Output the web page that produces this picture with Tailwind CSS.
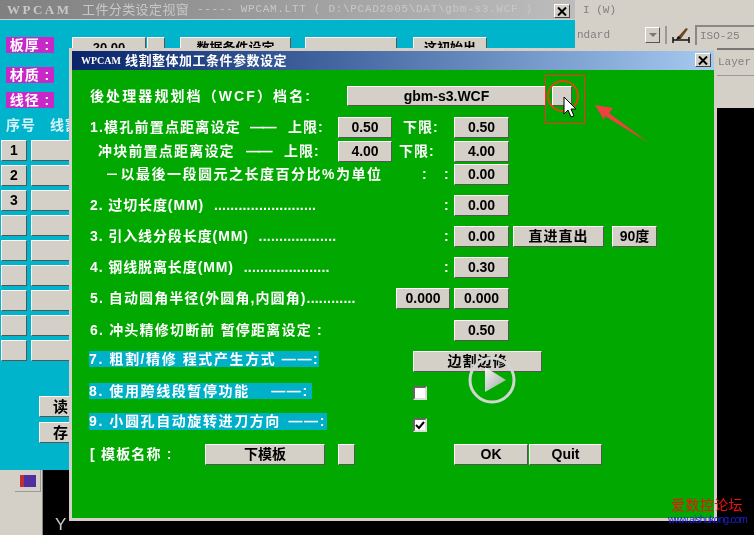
<!DOCTYPE html>
<html lang="en">
<head>
  <meta charset="UTF-8">
  <title>WPCAM</title>
  <script src="https://cdn.jsdelivr.net/npm/@tailwindcss/browser@4"></script>
</head>
<body class="bg-black">
  <div class="relative w-[754px] h-[535px] overflow-hidden bg-black blur-[0.35px] font-['Liberation_Sans','Noto_Sans_CJK_SC',sans-serif]">

    <!-- cad window behind -->
    <div class="absolute left-[575px] top-0 w-[179px] h-[48px] bg-[#d4d0c8] text-[#808080] font-['Liberation_Mono','Noto_Sans_CJK_SC',monospace]">
      <div class="h-[20px] pl-[8px] flex items-center text-[11px]">I (W)</div>
      <div class="flex items-center h-[22px] mt-[4px]">
        <div class="w-[70px] h-[20px] flex items-center bg-[#d4d0c8] text-[11px] pl-[2px]">ndard</div>
        <div class="w-[15px] h-[16px] bg-[#d4d0c8] border border-t-white border-l-white border-r-[#555] border-b-[#555] flex items-center justify-center">
          <div class="w-0 h-0 border-x-[4px] border-x-transparent border-t-[4px] border-t-[#777]"></div>
        </div>
        <div class="ml-[5px] w-[2px] h-[18px] bg-[#999]"></div>
        <svg class="ml-[5px]" width="18" height="18" viewBox="0 0 18 18"><path d="M1 14h16M1 11v6M17 11v6" stroke="#111" stroke-width="1.5" fill="none"/><path d="M5 12 14 2l2 1-8 11z" fill="#6b4a20"/><path d="M4 14l2-4 3 2z" fill="#111"/></svg>
        <div class="ml-[5px] flex-1 h-[20px] flex items-center pl-[3px] border-l-2 border-t-2 border-[#888] text-[11px]">ISO-25</div>
      </div>
    </div>
    <div class="absolute left-[717px] top-[48px] w-[37px] h-[60px] bg-[#d4d0c8] border-t-2 border-[#777]">
      <div class="h-[26px] border-b border-[#999] pl-px flex items-center text-[11px] text-[#808080] font-['Liberation_Mono',monospace] overflow-hidden">Layer</div>
    </div>
    <div class="absolute left-0 top-[470px] w-[43px] h-[65px] bg-[#d4d0c8] border-r border-[#888]">
      <div class="ml-[15px] w-[26px] h-[22px] border-r border-b border-[#999] flex items-center justify-center">
        <div class="w-[16px] h-[12px] bg-[#5030a0] border-l-4 border-[#c03030]"></div>
      </div>
    </div>
    <div class="absolute left-[55px] top-[516px] text-[17px] leading-[18px] text-[#cccccc]">Y</div>

    <!-- parts classification window -->
    <div class="absolute left-0 top-0 w-[577px] h-[470px] bg-[#00b4cc] border-r-2 border-[#d4d0c8] flex flex-col">
      <div class="h-[20px] shrink-0 bg-gradient-to-r from-[#808080] to-[#bdbdbd] flex items-center pl-[7px] text-[#c8c8c8] border-b border-[#d0d0d0]">
        <span class="w-[75px] text-[13px] font-bold tracking-[2.5px] font-['Liberation_Serif',serif]">WPCAM</span>
        <span class="w-[115px] text-[13px] tracking-[0.4px] whitespace-nowrap">工件分类设定视窗</span>
        <span class="text-[11px] whitespace-pre font-['Liberation_Mono','Noto_Sans_CJK_SC',monospace] tracking-[0.7px]">----- WPCAM.LTT ( D:\PCAD2005\DAT\gbm-s3.WCF )</span>
        <div class="absolute left-[554px] top-[4px] w-[16px] h-[14px] bg-[#d4d0c8] border border-t-white border-l-white border-r-[#444] border-b-[#444] flex items-center justify-center">
          <svg width="10" height="9" viewBox="0 0 10 9"><path d="M1 0.5 9 8.5M9 0.5 1 8.5" stroke="#000" stroke-width="2"/></svg>
        </div>
      </div>
      <div class="pl-[6px] pt-[17px]">
        <div class="flex">
          <span class="w-[48px] h-[16px] bg-[#c828c8] text-white text-[14px] leading-[16px] font-bold tracking-[1px] text-center whitespace-nowrap">板厚 :</span>
          <div class="ml-[18px] w-[74px] h-[21px] bg-[#d4d0c8] border border-t-white border-l-white border-r-[#555] border-b-[#555] text-center text-[13px] font-bold">20.00</div>
          <div class="ml-px w-[18px] h-[21px] bg-[#d4d0c8] border border-t-white border-l-white border-r-[#555] border-b-[#555]"></div>
          <div class="ml-[15px] w-[111px] h-[21px] bg-[#d4d0c8] border border-t-white border-l-white border-r-[#555] border-b-[#555] text-center text-[13px] font-bold whitespace-nowrap">数据条件设定</div>
          <div class="ml-[14px] w-[92px] h-[21px] bg-[#d4d0c8] border border-t-white border-l-white border-r-[#555] border-b-[#555]"></div>
          <div class="ml-[16px] w-[74px] h-[21px] bg-[#d4d0c8] border border-t-white border-l-white border-r-[#555] border-b-[#555] text-center text-[13px] font-bold whitespace-nowrap">这初始出</div>
        </div>
        <div class="mt-[9px] w-[48px] h-[16px] bg-[#c828c8] text-white text-[14px] leading-[16px] font-bold tracking-[1px] text-center whitespace-nowrap">材质 :</div>
        <div class="mt-[9px] w-[48px] h-[16px] bg-[#c828c8] text-white text-[14px] leading-[16px] font-bold tracking-[1px] text-center whitespace-nowrap">线径 :</div>
        <div class="mt-[9px] h-[16px] flex text-[14px] leading-[16px] text-[#d8f4f8] font-bold tracking-[1px]">
          <span class="w-[44px]">序号</span><span>线割</span>
        </div>
      </div>
      <div class="mt-[7px] pl-px flex flex-col gap-[4px] text-[14px] font-bold">
        <div class="flex gap-[4px]"><div class="w-[26px] h-[21px] bg-[#d4d0c8] border border-t-white border-l-white border-r-[#555] border-b-[#555] text-center leading-[19px]">1</div><div class="w-[90px] h-[21px] bg-[#d4d0c8] border border-t-white border-l-white border-r-[#555] border-b-[#555] text-center leading-[19px]">新</div></div>
        <div class="flex gap-[4px]"><div class="w-[26px] h-[21px] bg-[#d4d0c8] border border-t-white border-l-white border-r-[#555] border-b-[#555] text-center leading-[19px]">2</div><div class="w-[90px] h-[21px] bg-[#d4d0c8] border border-t-white border-l-white border-r-[#555] border-b-[#555] text-center leading-[19px]">让</div></div>
        <div class="flex gap-[4px]"><div class="w-[26px] h-[21px] bg-[#d4d0c8] border border-t-white border-l-white border-r-[#555] border-b-[#555] text-center leading-[19px]">3</div><div class="w-[90px] h-[21px] bg-[#d4d0c8] border border-t-white border-l-white border-r-[#555] border-b-[#555] text-center leading-[19px]">上</div></div>
        <div class="flex gap-[4px]"><div class="w-[26px] h-[21px] bg-[#d4d0c8] border border-t-white border-l-white border-r-[#555] border-b-[#555]"></div><div class="w-[90px] h-[21px] bg-[#d4d0c8] border border-t-white border-l-white border-r-[#555] border-b-[#555]"></div></div>
        <div class="flex gap-[4px]"><div class="w-[26px] h-[21px] bg-[#d4d0c8] border border-t-white border-l-white border-r-[#555] border-b-[#555]"></div><div class="w-[90px] h-[21px] bg-[#d4d0c8] border border-t-white border-l-white border-r-[#555] border-b-[#555]"></div></div>
        <div class="flex gap-[4px]"><div class="w-[26px] h-[21px] bg-[#d4d0c8] border border-t-white border-l-white border-r-[#555] border-b-[#555]"></div><div class="w-[90px] h-[21px] bg-[#d4d0c8] border border-t-white border-l-white border-r-[#555] border-b-[#555]"></div></div>
        <div class="flex gap-[4px]"><div class="w-[26px] h-[21px] bg-[#d4d0c8] border border-t-white border-l-white border-r-[#555] border-b-[#555]"></div><div class="w-[90px] h-[21px] bg-[#d4d0c8] border border-t-white border-l-white border-r-[#555] border-b-[#555]"></div></div>
        <div class="flex gap-[4px]"><div class="w-[26px] h-[21px] bg-[#d4d0c8] border border-t-white border-l-white border-r-[#555] border-b-[#555]"></div><div class="w-[90px] h-[21px] bg-[#d4d0c8] border border-t-white border-l-white border-r-[#555] border-b-[#555]"></div></div>
        <div class="flex gap-[4px]"><div class="w-[26px] h-[21px] bg-[#d4d0c8] border border-t-white border-l-white border-r-[#555] border-b-[#555]"></div><div class="w-[90px] h-[21px] bg-[#d4d0c8] border border-t-white border-l-white border-r-[#555] border-b-[#555]"></div></div>
      </div>
      <div class="mt-[35px] ml-[39px] flex flex-col gap-[5px] text-[15px] font-bold">
        <div class="w-[60px] h-[21px] bg-[#d4d0c8] border border-t-white border-l-white border-r-[#555] border-b-[#555] pl-[13px] leading-[19px]">读</div>
        <div class="w-[60px] h-[21px] bg-[#d4d0c8] border border-t-white border-l-white border-r-[#555] border-b-[#555] pl-[13px] leading-[19px]">存</div>
      </div>
    </div>

    <!-- wire cutting parameters dialog -->
    <div class="absolute left-[69px] top-[48px] w-[648px] h-[473px] bg-[#d4d0c8] p-[3px] flex flex-col">
      <div class="relative h-[19px] shrink-0 bg-gradient-to-r from-[#0a246a] to-[#a6caf0] flex items-center pl-[9px] text-white">
        <span class="w-[44px] text-[10px] font-bold font-['Liberation_Serif',serif] whitespace-nowrap">WPCAM</span>
        <span class="text-[13px] font-bold tracking-[0.5px] whitespace-nowrap">线割整体加工条件参数设定</span>
        <div class="absolute right-[3px] top-[2px] w-[16px] h-[14px] bg-[#d4d0c8] border border-t-white border-l-white border-r-[#444] border-b-[#444] flex items-center justify-center">
          <svg width="10" height="9" viewBox="0 0 10 9"><path d="M1 0.5 9 8.5M9 0.5 1 8.5" stroke="#000" stroke-width="2"/></svg>
        </div>
      </div>
      <div class="flex-1 bg-[#00a800] pl-[18px] pt-[16px] text-white text-[14px] font-bold">

        <div class="flex items-center h-[20px]">
          <span class="w-[257px] tracking-[2.1px] whitespace-nowrap">後处理器规划档（WCF）档名:</span>
          <div class="w-[199px] h-[20px] bg-[#d4d0c8] border border-t-white border-l-white border-r-[#555] border-b-[#555] flex items-center justify-center text-black text-[14px] font-bold">gbm-s3.WCF</div>
          <div class="ml-[6px] w-[20px] h-[20px] bg-[#d4d0c8] border border-t-white border-l-white border-r-[#555] border-b-[#555]"></div>
        </div>

        <div class="mt-[11px] flex items-center h-[21px]">
          <span class="w-[160px] tracking-[1.2px] whitespace-nowrap">1.模孔前置点距离设定</span>
          <span class="w-[38px] tracking-[-1.5px]">——</span>
          <span class="w-[50px] tracking-[1px] whitespace-nowrap">上限:</span>
          <div class="w-[54px] h-[21px] bg-[#d4d0c8] border border-t-white border-l-white border-r-[#555] border-b-[#555] flex items-center justify-center text-black">0.50</div>
          <span class="w-[62px] pl-[11px] tracking-[1px] whitespace-nowrap">下限:</span>
          <div class="w-[55px] h-[21px] bg-[#d4d0c8] border border-t-white border-l-white border-r-[#555] border-b-[#555] flex items-center justify-center text-black">0.50</div>
        </div>

        <div class="mt-[3px] flex items-center h-[21px] pl-[8px]">
          <span class="w-[148px] tracking-[1.2px] whitespace-nowrap">冲块前置点距离设定</span>
          <span class="w-[38px] tracking-[-1.5px]">——</span>
          <span class="w-[54px] tracking-[1px] whitespace-nowrap">上限:</span>
          <div class="w-[54px] h-[21px] bg-[#d4d0c8] border border-t-white border-l-white border-r-[#555] border-b-[#555] flex items-center justify-center text-black">4.00</div>
          <span class="w-[62px] pl-[7px] tracking-[1px] whitespace-nowrap">下限:</span>
          <div class="w-[55px] h-[21px] bg-[#d4d0c8] border border-t-white border-l-white border-r-[#555] border-b-[#555] flex items-center justify-center text-black">4.00</div>
        </div>

        <div class="mt-[2px] flex items-center h-[21px] pl-[15px]">
          <span class="w-[317px] tracking-[1.5px] whitespace-nowrap">－以最後一段圆元之长度百分比%为单位</span>
          <span class="w-[22px]">:</span>
          <span class="w-[10px]">:</span>
          <div class="w-[55px] h-[21px] bg-[#d4d0c8] border border-t-white border-l-white border-r-[#555] border-b-[#555] flex items-center justify-center text-black">0.00</div>
        </div>

        <div class="mt-[10px] flex items-center h-[21px]">
          <span class="w-[354px] tracking-[0.9px] whitespace-nowrap">2. 过切长度(MM) <span class="ml-[5px] tracking-[0.2px]">.........................</span></span>
          <span class="w-[10px]">:</span>
          <div class="w-[55px] h-[21px] bg-[#d4d0c8] border border-t-white border-l-white border-r-[#555] border-b-[#555] flex items-center justify-center text-black">0.00</div>
        </div>

        <div class="mt-[10px] flex items-center h-[21px]">
          <span class="w-[354px] tracking-[0.9px] whitespace-nowrap">3. 引入线分段长度(MM) <span class="ml-[5px] tracking-[0.2px]">...................</span></span>
          <span class="w-[10px]">:</span>
          <div class="w-[55px] h-[21px] bg-[#d4d0c8] border border-t-white border-l-white border-r-[#555] border-b-[#555] flex items-center justify-center text-black">0.00</div>
          <div class="ml-[4px] w-[91px] h-[21px] bg-[#d4d0c8] border border-t-white border-l-white border-r-[#555] border-b-[#555] flex items-center justify-center text-black tracking-[1px]">直进直出</div>
          <div class="ml-[8px] w-[45px] h-[21px] bg-[#d4d0c8] border border-t-white border-l-white border-r-[#555] border-b-[#555] flex items-center justify-center text-black">90度</div>
        </div>

        <div class="mt-[10px] flex items-center h-[21px]">
          <span class="w-[354px] tracking-[0.9px] whitespace-nowrap">4. 钢线脱离长度(MM) <span class="ml-[5px] tracking-[0.2px]">.....................</span></span>
          <span class="w-[10px]">:</span>
          <div class="w-[55px] h-[21px] bg-[#d4d0c8] border border-t-white border-l-white border-r-[#555] border-b-[#555] flex items-center justify-center text-black">0.30</div>
        </div>

        <div class="mt-[10px] flex items-center h-[21px]">
          <span class="w-[306px] tracking-[1.1px] whitespace-nowrap">5. 自动圆角半径(外圆角,内圆角)<span class="tracking-[0.2px]">............</span></span>
          <div class="w-[54px] h-[21px] bg-[#d4d0c8] border border-t-white border-l-white border-r-[#555] border-b-[#555] flex items-center justify-center text-black">0.000</div>
          <div class="ml-[4px] w-[55px] h-[21px] bg-[#d4d0c8] border border-t-white border-l-white border-r-[#555] border-b-[#555] flex items-center justify-center text-black">0.000</div>
        </div>

        <div class="mt-[11px] flex items-center h-[21px]">
          <span class="w-[364px] tracking-[1.2px] whitespace-nowrap">6. 冲头精修切断前 暂停距离设定 :</span>
          <div class="w-[55px] h-[21px] bg-[#d4d0c8] border border-t-white border-l-white border-r-[#555] border-b-[#555] flex items-center justify-center text-black">0.50</div>
        </div>

        <div class="mt-[10px] flex items-center h-[21px]">
          <span class="-ml-px w-[230px] h-[16px] -mt-[5px] leading-[16px] bg-[#00afc8] tracking-[1.6px] whitespace-nowrap">7. 粗割/精修 程式产生方式 ——:</span>
          <div class="ml-[94px] w-[129px] h-[21px] bg-[#d4d0c8] border border-t-white border-l-white border-r-[#555] border-b-[#555] flex items-center justify-center text-black tracking-[1px]">边割边修</div>
        </div>

        <div class="mt-[10px] flex items-center h-[21px]">
          <span class="-ml-px w-[223px] h-[16px] -mt-[4px] leading-[16px] bg-[#00afc8] tracking-[1.6px] whitespace-nowrap">8. 使用跨线段暂停功能 <span class="ml-[16px]">——:</span></span>
          <div class="ml-[101px] w-[14px] h-[14px] bg-white border-2 border-t-[#666] border-l-[#666] border-r-[#ddd] border-b-[#ddd] mt-px"></div>
        </div>

        <div class="mt-[10px] flex items-center h-[21px]">
          <span class="-ml-px w-[238px] h-[17px] -mt-[4px] leading-[17px] bg-[#00afc8] tracking-[1.6px] whitespace-nowrap">9. 小圆孔自动旋转进刀方向 <span class="ml-[2px]">——:</span></span>
          <div class="ml-[86px] w-[14px] h-[14px] bg-white border-2 border-t-[#666] border-l-[#666] border-r-[#ddd] border-b-[#ddd] mt-[3px] flex items-center justify-center">
            <svg width="10" height="9" viewBox="0 0 10 9"><path d="M1 4 4 7 9 1" stroke="#000" stroke-width="2" fill="none"/></svg>
          </div>
        </div>

        <div class="mt-[10px] flex items-center h-[21px]">
          <span class="w-[115px] tracking-[1.2px] whitespace-nowrap">[ 模板名称 :</span>
          <div class="w-[120px] h-[21px] bg-[#d4d0c8] border border-t-white border-l-white border-r-[#555] border-b-[#555] flex items-center justify-center text-black">下模板</div>
          <div class="ml-[13px] w-[17px] h-[21px] bg-[#d4d0c8] border border-t-white border-l-white border-r-[#555] border-b-[#555]"></div>
          <div class="ml-[99px] w-[74px] h-[21px] bg-[#d4d0c8] border border-t-white border-l-white border-r-[#555] border-b-[#555] flex items-center justify-center text-black">OK</div>
          <div class="ml-px w-[73px] h-[21px] bg-[#d4d0c8] border border-t-white border-l-white border-r-[#555] border-b-[#555] flex items-center justify-center text-black">Quit</div>
        </div>
      </div>
    </div>

    <!-- annotations drawn over the recording -->
    <svg class="absolute left-0 top-0" width="754" height="535" viewBox="0 0 754 535">
      <defs>
        <linearGradient id="playFill" x1="0" y1="0" x2="1" y2="1">
          <stop offset="0" stop-color="#f4f4f4"/>
          <stop offset="1" stop-color="#a0a8a0"/>
        </linearGradient>
      </defs>
      <rect x="545.5" y="75.5" width="39" height="48" fill="none" stroke="#ff2a2a" stroke-width="1"/>
      <circle cx="563" cy="96" r="15" fill="none" stroke="#d84a10" stroke-width="2"/>
      <path d="M564 97v17l4-4 3 7 3-1-3-7h5z" fill="#fff" stroke="#000" stroke-width="1"/>
      <path d="M595 105 613 108 609 113 649 143 605 116 604 120z" fill="#f04040"/>
      <circle cx="492" cy="380" r="22" fill="none" stroke="#d2d6d2" stroke-width="3"/>
      <path d="M485 367 506 380 485 392z" fill="url(#playFill)"/>
    </svg>
    <div class="absolute left-[671px] top-[497px] text-[14px] leading-[16px] tracking-[0.4px] text-[#f01010] whitespace-nowrap">爱数控论坛</div>
    <div class="absolute left-[668px] top-[513px] text-[10px] leading-[13px] tracking-[-0.7px] text-[#2020d8] whitespace-nowrap">www.aishukong.com</div>
  </div>
</body>
</html>
